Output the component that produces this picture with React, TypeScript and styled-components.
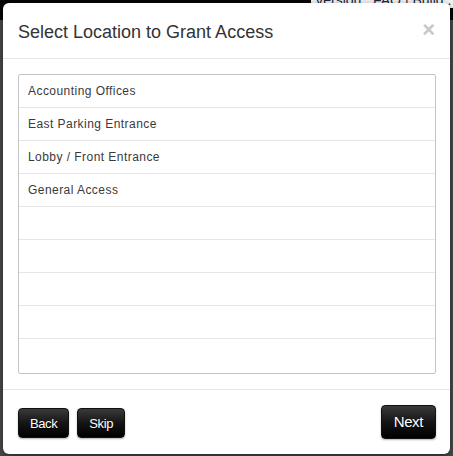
import React from 'react';
import styled, { createGlobalStyle } from 'styled-components';

const GlobalStyle = createGlobalStyle`
  html, body {
    margin: 0;
    padding: 0;
    background: #4c4c4c;
    font-family: "Liberation Sans", Arial, sans-serif;
  }
`;

// backdrop page behind the modal
const Page = styled.div`
  position: relative;
  width: 453px;
  height: 456px;
  overflow: hidden;
  background: #4c4c4c;
`;

const TopBar = styled.div`
  height: 20px;
  background: #050505;
  display: flex;
  justify-content: flex-end;
  align-items: flex-start;
`;

const VersionText = styled.span`
  margin-top: -8px;
  margin-right: -14px;
  padding: 0 4px;
  background: #f4f4f4;
  color: #1a2540;
  font-size: 14px;
  line-height: 16px;
  white-space: nowrap;
`;

const Modal = styled.div`
  position: absolute;
  top: 3px;
  left: 3px;
  width: 447px;
  height: 451px;
  background: #fff;
  border-radius: 6px;
  box-shadow: 0 3px 9px rgba(0, 0, 0, 0.5);
  display: flex;
  flex-direction: column;
  box-sizing: border-box;
`;

const ModalHeader = styled.div`
  display: flex;
  align-items: center;
  justify-content: space-between;
  padding: 4px 15px 0 15px;
  height: 51px;
  border-bottom: 1px solid #e5e5e5;
`;

const Title = styled.h4`
  margin: 0;
  font-size: 18px;
  font-weight: normal;
  color: #333;
`;

const CloseButton = styled.button`
  background: none;
  border: none;
  padding: 0;
  margin-top: -6px;
  font-family: "Liberation Sans", Arial, sans-serif;
  font-size: 22px;
  font-weight: bold;
  line-height: 1;
  color: #c8c8c8;
  cursor: pointer;
`;

const ModalBody = styled.div`
  padding: 15px 14px 15px 15px;
`;

const ListBox = styled.div`
  border: 1px solid #c4c4c4;
  border-radius: 2px;
  height: 298px;
  overflow: hidden;
  display: flex;
  flex-direction: column;
`;

const Row = styled.div<{ $last?: boolean }>`
  height: 32px;
  flex: none;
  display: flex;
  align-items: center;
  padding: 0 9px;
  border-bottom: ${(p) => (p.$last ? 'none' : '1px solid #e6e6e6')};
  font-size: 12px;
  letter-spacing: 0.45px;
  color: #3a3a3a;
`;

const ModalFooter = styled.div`
  border-top: 1px solid #e5e5e5;
  flex: 1;
  display: flex;
  align-items: center;
  justify-content: space-between;
  padding: 0 14px 1px 15px;
`;

const ButtonGroup = styled.div`
  display: flex;
  gap: 8px;
  margin-top: 3px;
`;

const DarkButton = styled.button<{ $big?: boolean }>`
  height: ${(p) => (p.$big ? '34px' : '30px')};
  padding: ${(p) => (p.$big ? '0 12px' : '0 11px')};
  border: 1px solid #111;
  border-radius: 4px;
  background: linear-gradient(to bottom, #3a3a3a 0%, #151515 50%, #000 100%);
  color: #fff;
  font-family: "Liberation Sans", Arial, sans-serif;
  font-size: ${(p) => (p.$big ? '15px' : '13px')};
  letter-spacing: -0.4px;
  text-shadow: 0 1px 1px rgba(0, 0, 0, 0.6);
  box-shadow: 0 1px 2px rgba(0, 0, 0, 0.3);
  cursor: pointer;
`;

const locations = [
  'Accounting Offices',
  'East Parking Entrance',
  'Lobby / Front Entrance',
  'General Access',
];

const App = () => {
  const rows = [...locations, '', '', '', '', ''];

  return (
    <Page>
      <GlobalStyle />
      <TopBar>
        <VersionText>Version : FAQ | Build : 0</VersionText>
      </TopBar>
      <Modal>
        <ModalHeader>
          <Title>Select Location to Grant Access</Title>
          <CloseButton>×</CloseButton>
        </ModalHeader>
        <ModalBody>
          <ListBox>
            {rows.map((name, i) => (
              <Row key={i} $last={i === rows.length - 1}>
                {name}
              </Row>
            ))}
          </ListBox>
        </ModalBody>
        <ModalFooter>
          <ButtonGroup>
            <DarkButton>Back</DarkButton>
            <DarkButton>Skip</DarkButton>
          </ButtonGroup>
          <DarkButton $big>Next</DarkButton>
        </ModalFooter>
      </Modal>
    </Page>
  );
};

export default App;
